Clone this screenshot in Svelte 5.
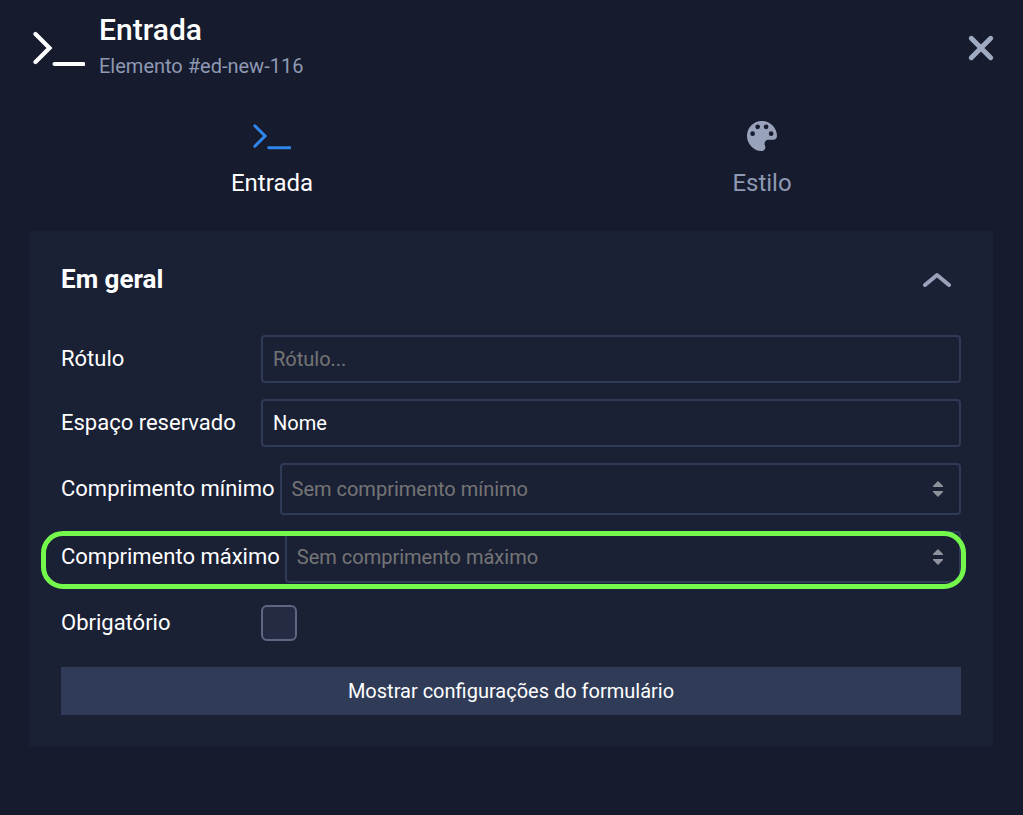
<script>
    let tab = $state('entrada');
    let open = $state(true);
    let label = $state('');
    let placeholder = $state('Nome');
    let minLength = $state(null);
    let maxLength = $state(null);
    let required = $state(false);

    function step(value, by) {
        return Math.max(0, (value ?? 0) + by);
    }
</script>

{#snippet prompt()}
    <svg class="prompt" viewBox="0 0 52 36" fill="none" stroke="currentColor" aria-hidden="true">
        <path d="M2.500 4 16.500 18 2.500 32" stroke-width="4.200" stroke-linecap="round" />
        <path d="M21.500 34H50.500" stroke-width="4" stroke-linecap="round" />
    </svg>
{/snippet}

{#snippet stepper(name, change)}
    <div class="stepper">
        <button type="button" aria-label="Aumentar {name}" onclick={() => change(1)}>
            <svg viewBox="0 0 10 6" aria-hidden="true"><path d="M5 0 10 5V6H0V5z" /></svg>
        </button>
        <button type="button" aria-label="Diminuir {name}" onclick={() => change(-1)}>
            <svg viewBox="0 0 10 6" aria-hidden="true"><path d="M0 0H10V1L5 6 0 1z" /></svg>
        </button>
    </div>
{/snippet}

<div class="editor">
    <header>
        {@render prompt()}
        <div class="title">
            <h1>Entrada</h1>
            <p>Elemento #ed-new-116</p>
        </div>
        <button class="close" type="button" aria-label="Fechar">
            <svg viewBox="0 0 24 24" aria-hidden="true">
                <path d="M2.300 2.300 21.700 21.700M21.700 2.300 2.300 21.700" />
            </svg>
        </button>
    </header>

    <nav>
        <button type="button" class:active={tab === 'entrada'} onclick={() => (tab = 'entrada')}>
            <span class="icon">{@render prompt()}</span>
            Entrada
        </button>
        <button type="button" class:active={tab === 'estilo'} onclick={() => (tab = 'estilo')}>
            <span class="icon">
                <svg class="palette" viewBox="0 0 512 512" fill="currentColor" aria-hidden="true">
                    <path d="M204.300 5C104.900 24.400 24.800 104.300 5.200 203.400c-37 187 131.700 326.400 258.800 306.700 41.200-6.400 61.400-54.600 42.500-91.700-23.100-45.400 9.900-98.400 60.900-98.400h79.700c35.800 0 64.800-29.600 64.900-65.300C511.500 97.100 368.100-26.900 204.300 5zM96 256a40 40 0 1 1 0-80 40 40 0 0 1 0 80zm86-116a40 40 0 1 1 0-80 40 40 0 0 1 0 80zm144 0a40 40 0 1 1 0-80 40 40 0 0 1 0 80zm86 116a40 40 0 1 1 0-80 40 40 0 0 1 0 80z" />
                </svg>
            </span>
            Estilo
        </button>
    </nav>

    <section>
        <div class="heading">
            <h2>Em geral</h2>
            <button class="toggle" class:closed={!open} type="button" aria-label="Recolher" aria-expanded={open} onclick={() => (open = !open)}>
                <svg viewBox="0 0 28 16" aria-hidden="true"><path d="M2 14 14 4 26 14" /></svg>
            </button>
        </div>

        {#if open}
            <form>
                <div class="row">
                    <label for="label">Rótulo</label>
                    <div class="field">
                        <input id="label" type="text" placeholder="Rótulo..." bind:value={label} />
                    </div>
                </div>
                <div class="row">
                    <label for="placeholder">Espaço reservado</label>
                    <div class="field">
                        <input id="placeholder" type="text" bind:value={placeholder} />
                    </div>
                </div>
                <div class="row">
                    <label for="min">Comprimento mínimo</label>
                    <div class="field number">
                        <input id="min" type="number" min="0" placeholder="Sem comprimento mínimo" bind:value={minLength} />
                        {@render stepper('mínimo', (by) => (minLength = step(minLength, by)))}
                    </div>
                </div>
                <div class="row highlight">
                    <label for="max">Comprimento máximo</label>
                    <div class="field number">
                        <input id="max" type="number" min="0" placeholder="Sem comprimento máximo" bind:value={maxLength} />
                        {@render stepper('máximo', (by) => (maxLength = step(maxLength, by)))}
                    </div>
                </div>
                <div class="row check">
                    <label for="required">Obrigatório</label>
                    <input id="required" type="checkbox" bind:checked={required} />
                </div>
                <button class="settings" type="button">Mostrar configurações do formulário</button>
            </form>
        {/if}
    </section>
</div>

<style>
    :global(body) {
        background: #161b2e;
    }

    .editor {
        box-sizing: border-box;
        min-height: 100vh;
        padding: 8px 30px 30px 29px;
        color: #fff;
        font-family: Roboto, "Liberation Sans", sans-serif;
        font-size: 20px;
    }

    button,
    input {
        font: inherit;
        color: inherit;
    }

    button {
        padding: 0;
        border: 0;
        background: none;
        cursor: pointer;
    }

    svg {
        display: block;
    }

    h1,
    h2,
    p {
        margin: 0;
    }

    header {
        display: flex;
        align-items: center;
        padding-left: 4px;
        height: 80px;
    }

    header .prompt {
        width: 52px;
        height: 36px;
    }

    .title {
        flex: 1;
        margin-left: 14px;
        padding-bottom: 8px;
    }

    h1 {
        font-size: 30px;
        font-weight: 500;
        line-height: 44px;
    }

    .title p {
        color: #8e99b3;
        line-height: 28px;
    }

    .close svg {
        width: 24px;
        height: 24px;
        overflow: visible;
        fill: none;
        stroke: #a0aac0;
        stroke-width: 5;
        stroke-linecap: round;
    }

    nav {
        display: flex;
        margin: 0 -14px 0 -2px;
        height: 143px;
    }

    nav button {
        flex: 1;
        display: flex;
        flex-direction: column;
        align-items: center;
        padding-top: 30px;
        color: #8e99b3;
        font-size: 24px;
        line-height: 32px;
    }

    nav button.active {
        color: #fff;
    }

    .icon {
        display: flex;
        align-items: center;
        height: 36px;
        margin-bottom: 13px;
        color: #98a2ba;
    }

    .active .icon {
        color: #2f86eb;
    }

    .icon .prompt {
        width: 38px;
        height: 28px;
    }

    .palette {
        width: 30px;
        height: 30px;
    }

    section {
        padding: 32px;
        background: #1b2135;
    }

    .heading {
        display: flex;
        align-items: center;
        justify-content: space-between;
        height: 32px;
        margin-bottom: 40px;
        padding-right: 10px;
    }

    h2 {
        font-size: 26px;
        font-weight: 700;
    }

    .toggle svg {
        width: 28px;
        height: 16px;
        fill: none;
        stroke: #98a2ba;
        stroke-width: 4;
        stroke-linecap: round;
        stroke-linejoin: round;
    }

    .closed svg {
        transform: rotate(180deg);
    }

    form {
        display: flex;
        flex-direction: column;
        gap: 16px;
    }

    .row {
        position: relative;
        display: flex;
        align-items: center;
        min-height: 48px;
    }

    label {
        box-sizing: border-box;
        flex: none;
        min-width: 200px;
        padding: 0 5px 2px 0;
        font-size: 22px;
        white-space: nowrap;
    }

    .field {
        box-sizing: border-box;
        flex: 1;
        display: flex;
        align-items: center;
        min-width: 0;
        height: 48px;
        padding: 0 10px;
        border: 2px solid #2f3a57;
        border-radius: 4px;
    }

    .number {
        height: 52px;
        padding-right: 16px;
    }

    .field input {
        flex: 1;
        min-width: 0;
        padding: 0;
        border: 0;
        outline: 0;
        background: none;
        appearance: textfield;
    }

    .field input::placeholder {
        color: #757575;
        opacity: 1;
    }

    .stepper {
        display: flex;
        flex-direction: column;
        gap: 4px;
    }

    .stepper svg {
        width: 10px;
        height: 6px;
        fill: #8f929c;
    }

    .highlight::after {
        content: "";
        position: absolute;
        inset: 0 -5px -6px -20px;
        border: 5px solid #75f84c;
        border-radius: 22px;
        pointer-events: none;
    }

    .check input {
        appearance: none;
        width: 36px;
        height: 36px;
        margin: 0;
        border: 2px solid #5d6683;
        border-radius: 6px;
        background: #242b43;
    }

    .check input:checked {
        background: #2f86eb;
    }

    .settings {
        height: 48px;
        margin-top: 4px;
        background: #303b57;
    }
</style>
